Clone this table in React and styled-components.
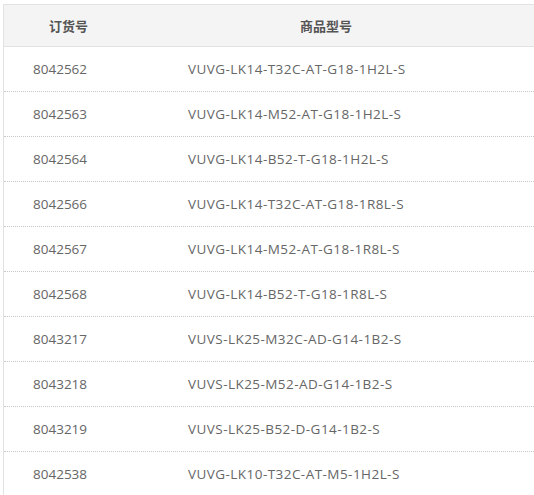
import React from 'react';
import styled, { createGlobalStyle } from 'styled-components';

const GlobalStyle = createGlobalStyle`
    body {
        margin: 0;
        background: #fff;
        overflow: hidden;
        font-family: "Open Sans", "Noto Sans CJK SC", sans-serif;
    }
`;

const Page = styled.div`
    padding: 4px 0 0 3px;
`;

const Table = styled.div`
    width: 580px;
    border-top: 1px solid #e2e2e2;
    border-left: 1px solid #e2e2e2;
`;

const Row = styled.div`
    display: grid;
    grid-template-columns: 154px 1fr;
    align-items: center;
    height: ${p => (p.$head ? '41px' : '44px')};
    background: ${p => (p.$head ? '#f4f4f4' : '#fff')};
    border-bottom: 1px ${p => (p.$head ? 'solid #e2e2e2' : 'dotted #c8c8c8')};
`;

const HeadCell = styled.div`
    padding-left: ${p => p.$pad}px;
    font-family: "Noto Sans CJK SC", sans-serif;
    font-size: 13px;
    font-weight: bold;
    color: #555;
`;

const Cell = styled.div`
    padding-left: ${p => p.$pad}px;
    font-size: 13.5px;
    letter-spacing: ${p => p.$spacing || 0}px;
    color: #666;
    white-space: nowrap;
`;

const items = [
    ['8042562', 'VUVG-LK14-T32C-AT-G18-1H2L-S'],
    ['8042563', 'VUVG-LK14-M52-AT-G18-1H2L-S'],
    ['8042564', 'VUVG-LK14-B52-T-G18-1H2L-S'],
    ['8042566', 'VUVG-LK14-T32C-AT-G18-1R8L-S'],
    ['8042567', 'VUVG-LK14-M52-AT-G18-1R8L-S'],
    ['8042568', 'VUVG-LK14-B52-T-G18-1R8L-S'],
    ['8043217', 'VUVS-LK25-M32C-AD-G14-1B2-S'],
    ['8043218', 'VUVS-LK25-M52-AD-G14-1B2-S'],
    ['8043219', 'VUVS-LK25-B52-D-G14-1B2-S'],
    ['8042538', 'VUVG-LK10-T32C-AT-M5-1H2L-S'],
];

function App() {
    return (
        <Page>
            <GlobalStyle />
            <Table>
                <Row $head>
                    <HeadCell $pad={45}>订货号</HeadCell>
                    <HeadCell $pad={142}>商品型号</HeadCell>
                </Row>
                {items.map(([no, model]) => (
                    <Row key={no}>
                        <Cell $pad={29}>{no}</Cell>
                        <Cell $pad={30} $spacing={0.45}>{model}</Cell>
                    </Row>
                ))}
            </Table>
        </Page>
    );
}

export default App;
